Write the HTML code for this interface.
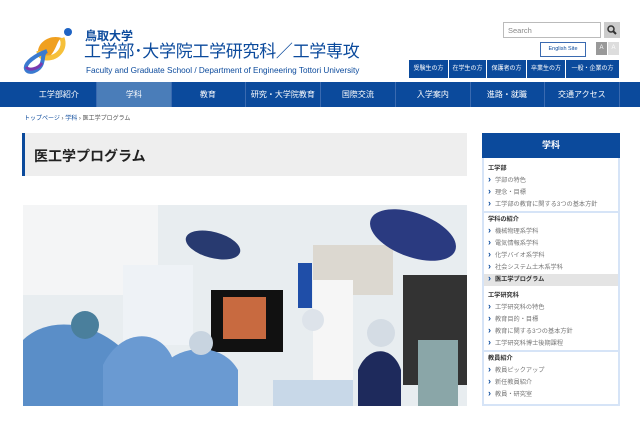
<!DOCTYPE html>
<html><head><meta charset="utf-8"><style>
*{margin:0;padding:0;box-sizing:border-box}
body{width:640px;height:426px;background:#fff;font-family:"Liberation Sans","Noto Sans CJK JP",sans-serif;position:relative;overflow:hidden;color:#333}
.a{position:absolute}
.nav{left:0;top:82px;width:640px;height:25px;background:#0b4a9c}
.nav div{position:absolute;top:0;height:25px;width:74.7px;color:#fff;font-size:8px;text-align:center;line-height:25px;border-right:1px solid #3a6ab0}
.tabs div{position:absolute;top:0;height:18px;background:#0b4a9c;color:#fff;font-size:6px;text-align:center;line-height:18px;border-right:1px solid #fff}
.side{left:482px;top:133px;width:138px;height:273px;border:2px solid #d6e4f7;border-top:none}
.side .h{position:absolute;left:-2px;top:0;width:138px;height:25px;background:#0b4a9c;color:#fff;font-size:9px;font-weight:bold;text-align:center;line-height:25px}
.s{position:absolute;left:4px;font-size:6.2px;line-height:8px;white-space:nowrap}
.s.b{font-weight:bold;color:#333}
.s.i{color:#777;padding-left:7px}
.s.i:before{content:"›";position:absolute;left:0;top:-2px;color:#0b4a9c;font-weight:bold;font-size:9px}
.dv{position:absolute;left:0;width:134px;height:2px;background:#d6e4f7}
</style></head><body>
<!-- logo -->
<svg class="a" style="left:20px;top:26px" width="56" height="48" viewBox="0 0 56 48">
<circle cx="48" cy="6" r="4" fill="#1e63c4"/>
<path d="M42 12 C30 8 18 16 18 26 C18 32 26 34 31 29 C37 22 37 14 42 12 Z" fill="#f0a020"/>
<path d="M42 12 C46 22 38 32 27 32 C22 32 19 29 19 25" fill="none" stroke="#f6c03a" stroke-width="5"/>
<path d="M27 25 C16 29 4 37 6 43 C8 49 20 45 22 37 C24 31 22 27 27 25" fill="none" stroke="#3a7ad0" stroke-width="4"/>
<path d="M22 37 C18 43 9 45 6 41" fill="none" stroke="#7a3ab0" stroke-width="3"/>
</svg>
<div class="a" style="left:85px;top:27px;font-size:12px;font-weight:bold;color:#0b4a9c">鳥取大学</div>
<div class="a" style="left:84px;top:42px;font-size:17px;line-height:20px;color:#0b4a9c;letter-spacing:-0.3px;white-space:nowrap">工学部･大学院工学研究科／工学専攻</div>
<div class="a" style="left:86px;top:66px;font-size:8.2px;line-height:9px;color:#0b4a9c;white-space:nowrap">Faculty and Graduate School / Department of Engineering Tottori University</div>
<!-- search -->
<div class="a" style="left:503px;top:22px;width:98px;height:16px;border:1px solid #bbb;font-size:7.5px;color:#888;padding:3px 0 0 4px">Search</div>
<div class="a" style="left:604px;top:22px;width:16px;height:16px;background:#ccc"><svg width="16" height="16"><circle cx="7" cy="7" r="3" fill="none" stroke="#333" stroke-width="1.5"/><line x1="9" y1="9" x2="12" y2="12" stroke="#333" stroke-width="2"/></svg></div>
<div class="a" style="left:540px;top:42px;width:46px;height:15px;border:1px solid #3a6ab0;font-size:5.5px;color:#0b4a9c;text-align:center;line-height:13px">English Site</div>
<div class="a" style="left:596px;top:42px;width:11px;height:13px;background:#999;color:#fff;font-size:6px;text-align:center;line-height:13px">A</div>
<div class="a" style="left:608px;top:42px;width:11px;height:13px;background:#ddd;color:#fff;font-size:6px;text-align:center;line-height:13px">A</div>
<div class="a tabs" style="left:409px;top:60px">
<div style="left:0;width:40px">受験生の方</div><div style="left:40px;width:38px">在学生の方</div><div style="left:78px;width:40px">保護者の方</div><div style="left:118px;width:39px">卒業生の方</div><div style="left:157px;width:54px">一般・企業の方</div></div>
<div class="a nav">
<div style="left:22px">工学部紹介</div><div style="left:97px;background:#4a7db9">学科</div><div style="left:171px">教育</div><div style="left:246px">研究・大学院教育</div><div style="left:321px">国際交流</div><div style="left:396px">入学案内</div><div style="left:470px">進路・就職</div><div style="left:545px">交通アクセス</div></div>
<div class="a" style="left:24px;top:113px;font-size:6px;color:#555;white-space:nowrap"><span style="color:#0b4a9c">トップページ</span> › <span style="color:#0b4a9c">学科</span> › 医工学プログラム</div>
<div class="a" style="left:22px;top:133px;width:445px;height:43px;background:#eee;border-left:3px solid #0b4a9c;font-size:14px;font-weight:bold;color:#222;padding:13px 0 0 9px">医工学プログラム</div>
<!-- photo -->
<svg class="a" style="left:23px;top:205px" width="444" height="201" viewBox="0 0 444 201">
<rect width="444" height="201" fill="#e8edf0"/>
<rect x="0" y="0" width="135" height="90" fill="#f4f5f6"/>
<rect x="290" y="40" width="80" height="50" fill="#dcd8d0"/>
<ellipse cx="190" cy="40" rx="28" ry="13" fill="#283a70" transform="rotate(15 190 40)"/>
<ellipse cx="390" cy="30" rx="45" ry="22" fill="#2a3a80" transform="rotate(20 390 30)"/>
<rect x="275" y="58" width="14" height="45" fill="#1f4ea8"/>
<rect x="100" y="60" width="70" height="80" fill="#eef2f6"/>
<rect x="188" y="85" width="72" height="62" fill="#111"/>
<rect x="200" y="92" width="43" height="42" fill="#c86a40"/>
<rect x="290" y="75" width="40" height="110" fill="#f6f6f6"/>
<rect x="380" y="70" width="64" height="110" fill="#333"/>
<rect x="395" y="135" width="40" height="66" fill="#8aa6a8"/>
<path d="M0 135 C20 115 60 112 95 140 L100 201 L0 201 Z" fill="#5a8ec8"/>
<circle cx="62" cy="120" r="14" fill="#4a7f9c"/>
<path d="M80 160 C100 120 140 125 150 155 L150 201 L80 201 Z" fill="#6a9ad2"/>
<path d="M140 160 C160 138 200 138 215 165 L215 201 L140 201 Z" fill="#6a9ad2"/>
<circle cx="178" cy="138" r="12" fill="#c8d4e0"/>
<circle cx="290" cy="115" r="11" fill="#dde3ea"/>
<path d="M335 165 C345 140 370 140 378 165 L378 201 L335 201 Z" fill="#1e2a5c"/>
<circle cx="358" cy="128" r="14" fill="#d4dce4"/>
<rect x="250" y="175" width="80" height="26" fill="#c8d8e8"/>
</svg>
<!-- sidebar -->
<div class="a side">
<div class="h">学科</div>
<div class="s b" style="top:32px">工学部</div>
<div class="s i" style="top:44px">学部の特色</div>
<div class="s i" style="top:56px">理念・目標</div>
<div class="s i" style="top:68px">工学部の教育に関する3つの基本方針</div>
<div class="dv" style="top:78px"></div>
<div class="s b" style="top:83px">学科の紹介</div>
<div class="s i" style="top:95px">機械物理系学科</div>
<div class="s i" style="top:107px">電気情報系学科</div>
<div class="s i" style="top:119px">化学バイオ系学科</div>
<div class="s i" style="top:131px">社会システム土木系学科</div>
<div style="position:absolute;left:0;top:141px;width:134px;height:12px;background:#e4e4e4"></div>
<div class="s i" style="top:143px;font-weight:bold;color:#333">医工学プログラム</div>
<div class="s b" style="top:159px">工学研究科</div>
<div class="s i" style="top:171px">工学研究科の特色</div>
<div class="s i" style="top:183px">教育目的・目標</div>
<div class="s i" style="top:195px">教育に関する3つの基本方針</div>
<div class="s i" style="top:207px">工学研究科博士後期課程</div>
<div class="dv" style="top:217px"></div>
<div class="s b" style="top:222px">教員紹介</div>
<div class="s i" style="top:234px">教員ピックアップ</div>
<div class="s i" style="top:246px">新任教員紹介</div>
<div class="s i" style="top:258px">教員・研究室</div>
</div>
</body></html>
